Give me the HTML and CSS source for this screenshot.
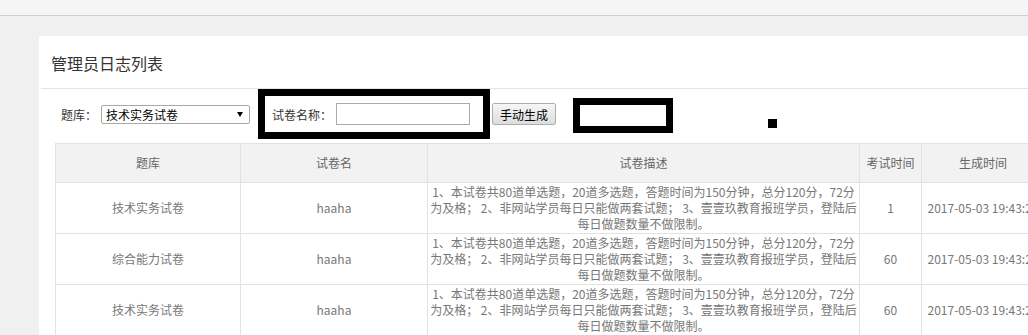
FILE: index.html
```html
<!DOCTYPE html>
<html lang="zh">
<head>
    <meta charset="UTF-8">
    <title>管理员日志列表</title>
    <link rel="stylesheet" href="styles.css">
</head>
<body>
    <div class="topbar"></div>
    <div class="main">
        <div class="panel">
            <div class="panel-header">管理员日志列表</div>
            <div class="panel-body">
                <div class="toolbar">
                    <label class="field-label">题库：</label>
                    <div class="select-wrap">
                        <select class="bank-select">
                            <option>技术实务试卷</option>
                            <option>综合能力试卷</option>
                        </select>
                        <svg class="select-arrow" width="6" height="5" viewBox="0 0 6 5"><path d="M0 0H6L3 5Z" fill="#000"/></svg>
                    </div>
                    <div class="mark-box">
                        <label class="field-label">试卷名称：</label>
                        <input type="text" class="name-input">
                    </div>
                    <button class="btn">手动生成</button>
                    <div class="mark-box mark-empty"></div>
                    <div class="mark-dot"></div>
                </div>

                <table class="paper-table">
                    <colgroup>
                        <col style="width:185px">
                        <col style="width:187px">
                        <col style="width:432px">
                        <col style="width:62px">
                        <col>
                    </colgroup>
                    <thead>
                        <tr>
                            <th>题库</th>
                            <th>试卷名</th>
                            <th>试卷描述</th>
                            <th>考试时间</th>
                            <th>生成时间</th>
                        </tr>
                    </thead>
                    <tbody>
                        <tr>
                            <td>技术实务试卷</td>
                            <td>haaha</td>
                            <td>1、本试卷共80道单选题，20道多选题，答题时间为150分钟，总分120分，72分为及格； 2、非网站学员每日只能做两套试题； 3、壹壹玖教育报班学员，登陆后每日做题数量不做限制。</td>
                            <td>1</td>
                            <td class="nowrap">2017-05-03 19:43:21</td>
                        </tr>
                        <tr>
                            <td>综合能力试卷</td>
                            <td>haaha</td>
                            <td>1、本试卷共80道单选题，20道多选题，答题时间为150分钟，总分120分，72分为及格； 2、非网站学员每日只能做两套试题； 3、壹壹玖教育报班学员，登陆后每日做题数量不做限制。</td>
                            <td>60</td>
                            <td class="nowrap">2017-05-03 19:43:21</td>
                        </tr>
                        <tr>
                            <td>技术实务试卷</td>
                            <td>haaha</td>
                            <td>1、本试卷共80道单选题，20道多选题，答题时间为150分钟，总分120分，72分为及格； 2、非网站学员每日只能做两套试题； 3、壹壹玖教育报班学员，登陆后每日做题数量不做限制。</td>
                            <td>60</td>
                            <td class="nowrap">2017-05-03 19:43:21</td>
                        </tr>
                    </tbody>
                </table>
            </div>
        </div>
    </div>
</body>
</html>
```

FILE: styles.css
```css
html, body {
    margin: 0;
    padding: 0;
}
body {
    width: 1028px;
    height: 335px;
    overflow: hidden;
    background: #f0f0f0;
    font-family: 'Noto Sans CJK SC', 'Liberation Sans', sans-serif;
    font-size: 12px;
    color: #333;
}
.topbar {
    height: 15px;
    background: #f5f5f5;
    border-bottom: 1px solid #cfcfcf;
}
.main {
    padding: 20px 0 0 39px;
}
.panel {
    width: 1030px;
    height: 400px;
    background: #fff;
}
.panel-header {
    height: 52px;
    line-height: 54px;
    margin-left: 2px;
    padding-left: 10px;
    font-size: 16px;
    color: #333;
    border-bottom: 1px solid #e5e5e5;
}
.panel-body {
    padding: 0 0 0 16px;
}

/* 工具列 */
.toolbar {
    display: flex;
    align-items: center;
    height: 50px;
    padding-left: 6px;
}
.field-label {
    font-size: 12px;
    color: #333;
    margin-right: 4px;
}
.select-wrap {
    position: relative;
    margin-right: 8px;
}
.bank-select {
    -webkit-appearance: none;
    appearance: none;
    display: block;
    width: 149px;
    height: 19px;
    padding: 0 0 0 4px;
    border: 1px solid #a9a9a9;
    border-radius: 2px;
    background: #fff;
    font-family: inherit;
    font-size: 12px;
    color: #000;
    line-height: 17px;
}
.select-arrow {
    position: absolute;
    right: 7px;
    top: 7px;
    pointer-events: none;
}
.mark-box {
    display: flex;
    align-items: center;
    box-sizing: border-box;
    width: 232px;
    height: 50px;
    padding-left: 7px;
    border: 7px solid #000;
    align-self: flex-start;
}
.name-input {
    box-sizing: border-box;
    width: 134px;
    height: 22px;
    border: 1px solid #aaa;
    padding: 0 4px;
    font-family: inherit;
}
.btn {
    box-sizing: border-box;
    width: 64px;
    height: 22px;
    margin-left: 2px;
    padding: 0;
    border: 1px solid #adadad;
    border-radius: 2px;
    background: linear-gradient(#f6f6f6, #dddddd);
    font-family: inherit;
    font-size: 12px;
    color: #000;
}
.mark-empty {
    width: 100px;
    height: 35px;
    margin-left: 17px;
    align-self: center;
    margin-top: 2px;
}
.mark-dot {
    width: 9px;
    height: 9px;
    margin-left: 95px;
    margin-top: 19px;
    background: #000;
}

/* 表格 */
.paper-table {
    margin-top: 4px;
    width: 990px;
    table-layout: fixed;
    border-collapse: collapse;
}
.paper-table th,
.paper-table td {
    border: 1px solid #e2e2e2;
    text-align: center;
    font-size: 12px;
    line-height: 16px;
    font-weight: normal;
}
.paper-table th {
    background: #f2f2f2;
    color: #666;
    padding: 11px 4px;
}
.paper-table td {
    color: #777;
    padding: 1px 0;
}
.nowrap {
    white-space: nowrap;
    overflow: hidden;
}
```
